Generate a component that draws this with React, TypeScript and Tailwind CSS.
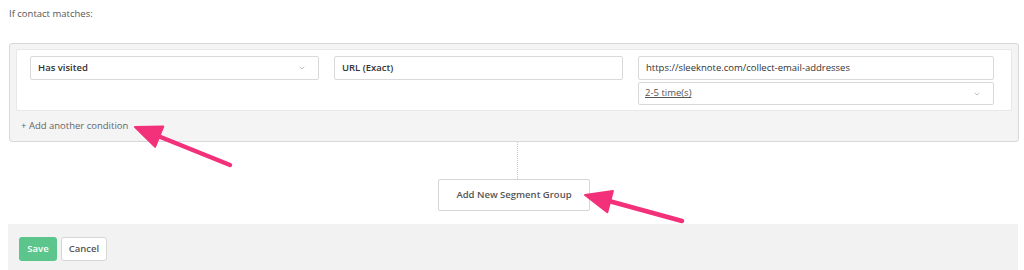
import { ChevronDown } from "lucide-react";

const font = { fontFamily: '"Open Sans", "Noto Sans", sans-serif' };

function Chevron() {
  return <ChevronDown size={8} strokeWidth={2} className="text-[#a0a0a0]" />;
}

export default function App() {
  return (
    <div className="relative w-[1024px] h-[270px] bg-white text-[9.5px] text-[#444] overflow-hidden" style={font}>
      <div className="pl-[9px] pt-[7px] h-[43px] text-[#555]">If contact matches:</div>

      {/* segment group */}
      <div className="ml-[9px] mr-[5px] h-[99px] rounded-[3px] border border-[#d8d8d8] bg-[#f4f4f4] px-[6px] pt-[5px]">
        <div className="h-[62px] rounded-[2px] border border-[#e8e8e8] bg-white pl-[13px] pr-[17px] pt-[6px]">
          <div className="grid grid-cols-[289px_289px_1fr] gap-x-[15px]">
            <div className="flex h-[24px] items-center justify-between rounded-[2px] border border-[#d9d9d9] bg-white pl-[7px] pr-[12px] font-semibold text-[#333]">
              <span>Has visited</span>
              <Chevron />
            </div>
            <div className="flex h-[24px] items-center rounded-[2px] border border-[#d9d9d9] bg-white px-[7px] font-semibold text-[#333]">
              URL (Exact)
            </div>
            <div className="flex flex-col gap-[2px]">
              <div className="flex h-[24px] items-center rounded-[2px] border border-[#d9d9d9] bg-white px-[7px] font-medium text-[#333]">
                https://sleeknote.com/collect-email-addresses
              </div>
              <div className="flex h-[23px] items-center justify-between rounded-[2px] border border-[#d9d9d9] bg-white pl-[6px] pr-[12px] text-[#555]">
                <span className="underline">2-5 time(s)</span>
                <Chevron />
              </div>
            </div>
          </div>
        </div>
        <div className="pl-[5px] pt-[8px] text-[#666]">+ Add another condition</div>
      </div>

      <div className="flex flex-col items-center">
        <div className="ml-[10px] h-[37px] border-l border-dotted border-[#c8c8c8]" />
        <button className="ml-[4px] h-[32px] w-[152px] rounded-[2px] border border-[#d6d6d6] bg-white font-semibold text-[#555]">
          Add New Segment Group
        </button>
      </div>

      <div className="mt-[13px] ml-[8px] mr-[6px] flex h-[48px] gap-[4px] bg-[#f2f2f2] pl-[11px] pt-[13px]">
        <button className="h-[24px] w-[38px] rounded-[3px] bg-[#5cc58b] font-semibold text-white">Save</button>
        <button className="h-[24px] w-[46px] rounded-[3px] border border-[#d6d6d6] bg-white font-semibold text-[#555]">Cancel</button>
      </div>

      {/* annotation arrows */}
      <svg className="absolute left-[130px] top-[118px]" width="110" height="55" viewBox="0 0 110 55">
        <path d="M28 18 L100 47" stroke="#f2317a" strokeWidth="4.5" strokeLinecap="round" />
        <path d="M5 9 L33.3 8.4 L25.1 28.8 Z" fill="#f2317a" stroke="#f2317a" strokeWidth="2" strokeLinejoin="round" />
      </svg>
      <svg className="absolute left-[580px] top-[188px]" width="110" height="40" viewBox="0 0 110 40">
        <path d="M29 13 L102 33" stroke="#f2317a" strokeWidth="4.5" strokeLinecap="round" />
        <path d="M5 7 L32.9 3.1 L27.3 24.3 Z" fill="#f2317a" stroke="#f2317a" strokeWidth="2" strokeLinejoin="round" />
      </svg>
    </div>
  );
}
